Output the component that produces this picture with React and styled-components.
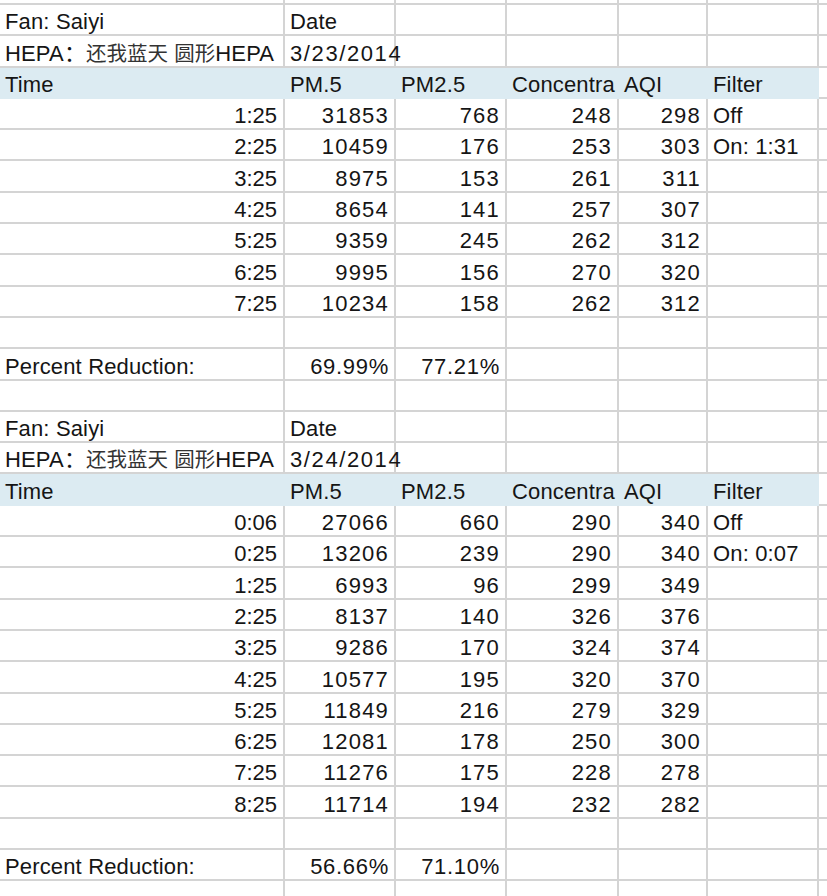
import React from 'react';
import styled, { createGlobalStyle } from 'styled-components';

const GlobalStyle = createGlobalStyle`
    html, body {
        margin: 0;
        padding: 0;
        background: #ffffff;
        overflow: hidden;
    }
`

const LINE = '#d4d4d4';
const BAND = '#dcebf2';

// extra tracking so the digits get the width of the original font
const SPACING = { num: '1.2px', date: '1.6px', pct: '0.7px', text: '0.15px' };

const Sheet = styled.div`
    width: 827px;
    height: 896px;
    overflow: hidden;
    font-family: "Liberation Sans", "Noto Sans CJK SC", sans-serif;
    font-size: 22px;
    color: #151515;
`

const Row = styled.div`
    display: grid;
    grid-template-columns: 285px 111px 111px 112px 89px 111px 1fr;
    height: ${p => (p.$stub ? '5px' : '31.3px')};
    box-sizing: border-box;
`

const Cell = styled.div`
    box-sizing: border-box;
    display: flex;
    align-items: flex-end;
    justify-content: ${p => (p.$right ? 'flex-end' : 'flex-start')};
    padding: 0 ${p => (p.$kind === 'num' || p.$kind === 'pct' ? '5px' : '6px')} 1px 5px;
    white-space: nowrap;
    overflow: ${p => (p.$kind === 'date' ? 'visible' : 'hidden')};
    position: relative;
    z-index: ${p => (p.$kind === 'date' ? 1 : 0)};
    letter-spacing: ${p => SPACING[p.$kind] || '0'};
    border-right: 2px solid ${p => (p.$band ? BAND : LINE)};
    border-bottom: 2px solid ${p => (p.$band ? BAND : LINE)};
    background: ${p => (p.$band ? BAND : 'transparent')};
    line-height: 1;
`

const Value = styled.span`
    white-space: pre;
`

const Han = styled.span`
    font-size: 20.5px;
    letter-spacing: 0;
    color: #333;
`

const kindOf = (c) => {
    if (typeof c === 'number') return 'num';
    if (typeof c !== 'string') return 'text';
    if (c.endsWith('%')) return 'pct';
    if (/^\d+\/\d+\/\d+$/.test(c)) return 'date';
    if (/^\d+:\d+$/.test(c)) return 'time';
    return 'text';
};

const SheetRow = ({ cells = [], header, stub }) => {
    const full = [...cells];
    while (full.length < 7) full.push(null);
    return (
        <Row $stub={stub}>
            {full.map((c, i) => {
                const kind = kindOf(c);
                const right = kind === 'num' || kind === 'pct' || kind === 'time';
                return (
                    <Cell key={i} $right={right} $kind={kind} $band={header && i < 6}>
                        {c !== null && <Value>{c}</Value>}
                    </Cell>
                );
            })}
        </Row>
    );
};

const table1 = [
    ['1:25', 31853, 768, 248, 298, 'Off'],
    ['2:25', 10459, 176, 253, 303, 'On: 1:31'],
    ['3:25', 8975, 153, 261, 311],
    ['4:25', 8654, 141, 257, 307],
    ['5:25', 9359, 245, 262, 312],
    ['6:25', 9995, 156, 270, 320],
    ['7:25', 10234, 158, 262, 312],
];

const table2 = [
    ['0:06', 27066, 660, 290, 340, 'Off'],
    ['0:25', 13206, 239, 290, 340, 'On: 0:07'],
    ['1:25', 6993, 96, 299, 349],
    ['2:25', 8137, 140, 326, 376],
    ['3:25', 9286, 170, 324, 374],
    ['4:25', 10577, 195, 320, 370],
    ['5:25', 11849, 216, 279, 329],
    ['6:25', 12081, 178, 250, 300],
    ['7:25', 11276, 175, 228, 278],
    ['8:25', 11714, 194, 232, 282],
];

const hepa = <>HEPA：<Han>还我蓝天</Han> <Han>圆形</Han>HEPA</>;

const Block = ({ date, rows, pm5, pm25 }) => (
    <>
        <SheetRow cells={['Fan: Saiyi', 'Date']} />
        <SheetRow cells={[hepa, date]} />
        <SheetRow header cells={['Time', 'PM.5', 'PM2.5', 'Concentra', 'AQI', 'Filter']} />
        {rows.map((r, i) => <SheetRow key={i} cells={r} />)}
        <SheetRow />
        <SheetRow cells={['Percent Reduction:', pm5, pm25]} />
        <SheetRow />
    </>
);

export default function App() {
    return (
        <Sheet>
            <GlobalStyle />
            <SheetRow stub />
            <Block date="3/23/2014" rows={table1} pm5="69.99%" pm25="77.21%" />
            <Block date="3/24/2014" rows={table2} pm5="56.66%" pm25="71.10%" />
        </Sheet>
    );
}
